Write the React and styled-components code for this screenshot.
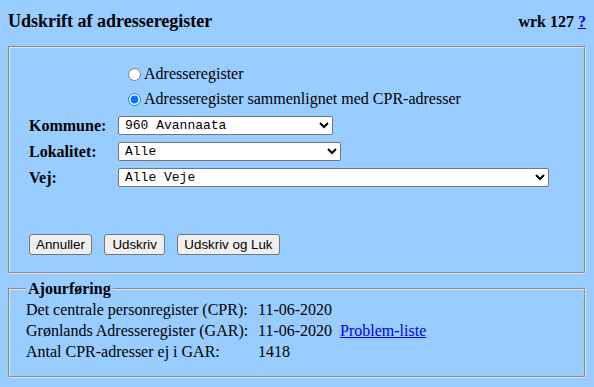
import React from "react"
import styled, { createGlobalStyle } from "styled-components"

const Global = createGlobalStyle`
  body {
    margin: 8px;
    background: #99ccff;
    font-family: "Liberation Serif", "Times New Roman", serif;
    font-size: 16px;
    color: #000;
  }
`

const Header = styled.div`
  display: flex;
  justify-content: space-between;
  align-items: baseline;
  padding: 3px 0 0 0;
  height: 35px;
`

const Title = styled.div`
  font-size: 18px;
  font-weight: bold;
`

const Wrk = styled.div`
  font-size: 16px;
  font-weight: bold;
  a {
    color: #0000ee;
  }
`

const Box = styled.fieldset`
  margin: ${props => props.$top || 0}px 0 0 0;
  border: 2px groove #e0e0e0;
  padding: ${props => props.$pad};
`

const Legend = styled.legend`
  font-weight: bold;
  padding: 0 2px;
`

const Form = styled.div`
  display: grid;
  grid-template-columns: 89px auto;
  align-items: center;
  row-gap: 7px;
`

const RadioRow = styled.label`
  grid-column: 2;
  display: flex;
  align-items: center;
  height: 18px;
  margin-bottom: ${props => props.$mb || 0}px;
  input {
    margin: 0 3px 0 10px;
    width: 13px;
    height: 13px;
  }
`

const Label = styled.div`
  font-weight: bold;
`

const Select = styled.select`
  font-family: "Liberation Mono", "Courier New", monospace;
  font-size: 13px;
  height: 19px;
  width: ${props => props.$w}px;
  border: 1px solid #767676;
  border-radius: 2px;
  background: #fff;
  padding: 0 0 0 2px;
  color: #000;
`

const Buttons = styled.div`
  display: flex;
  gap: 12px;
  margin-top: 47px;
`

const Button = styled.button`
  font-family: "Liberation Sans", Arial, sans-serif;
  font-size: 13.33px;
  height: 21px;
  padding: 1px ${props => props.$px || 6}px;
  background: #efefef;
  border: 1px solid #767676;
  border-radius: 3px;
  color: #000;
`

const Info = styled.div`
  display: grid;
  grid-template-columns: 232px auto;
  row-gap: 3px;
  a {
    color: #0000ee;
    margin-left: 8px;
  }
`

export default function App() {
  return (
    <>
      <Global />
      <Header>
        <Title>Udskrift af adresseregister</Title>
        <Wrk>
          wrk 127 <a href="#">?</a>
        </Wrk>
      </Header>
      <Box $pad="17px 12px 17px 19px">
        <Form>
          <RadioRow>
            <input type="radio" name="r" />
            Adresseregister
          </RadioRow>
          <RadioRow $mb={1}>
            <input type="radio" name="r" defaultChecked />
            Adresseregister sammenlignet med CPR-adresser
          </RadioRow>
          <Label>Kommune:</Label>
          <Select $w={215} defaultValue="960">
            <option value="960">960 Avannaata</option>
          </Select>
          <Label>Lokalitet:</Label>
          <Select $w={223}>
            <option>Alle</option>
          </Select>
          <Label>Vej:</Label>
          <Select $w={431}>
            <option>Alle Veje</option>
          </Select>
        </Form>
        <Buttons>
          <Button>Annuller</Button>
          <Button $px={7.5}>Udskriv</Button>
          <Button>Udskriv og Luk</Button>
        </Buttons>
      </Box>
      <Box $top={6} $pad="3px 12px 15px 16px">
        <Legend>Ajourføring</Legend>
        <Info>
          <div>Det centrale personregister (CPR):</div>
          <div>11-06-2020</div>
          <div>Grønlands Adresseregister (GAR):</div>
          <div>
            11-06-2020<a href="#">Problem-liste</a>
          </div>
          <div>Antal CPR-adresser ej i GAR:</div>
          <div>1418</div>
        </Info>
      </Box>
    </>
  )
}
